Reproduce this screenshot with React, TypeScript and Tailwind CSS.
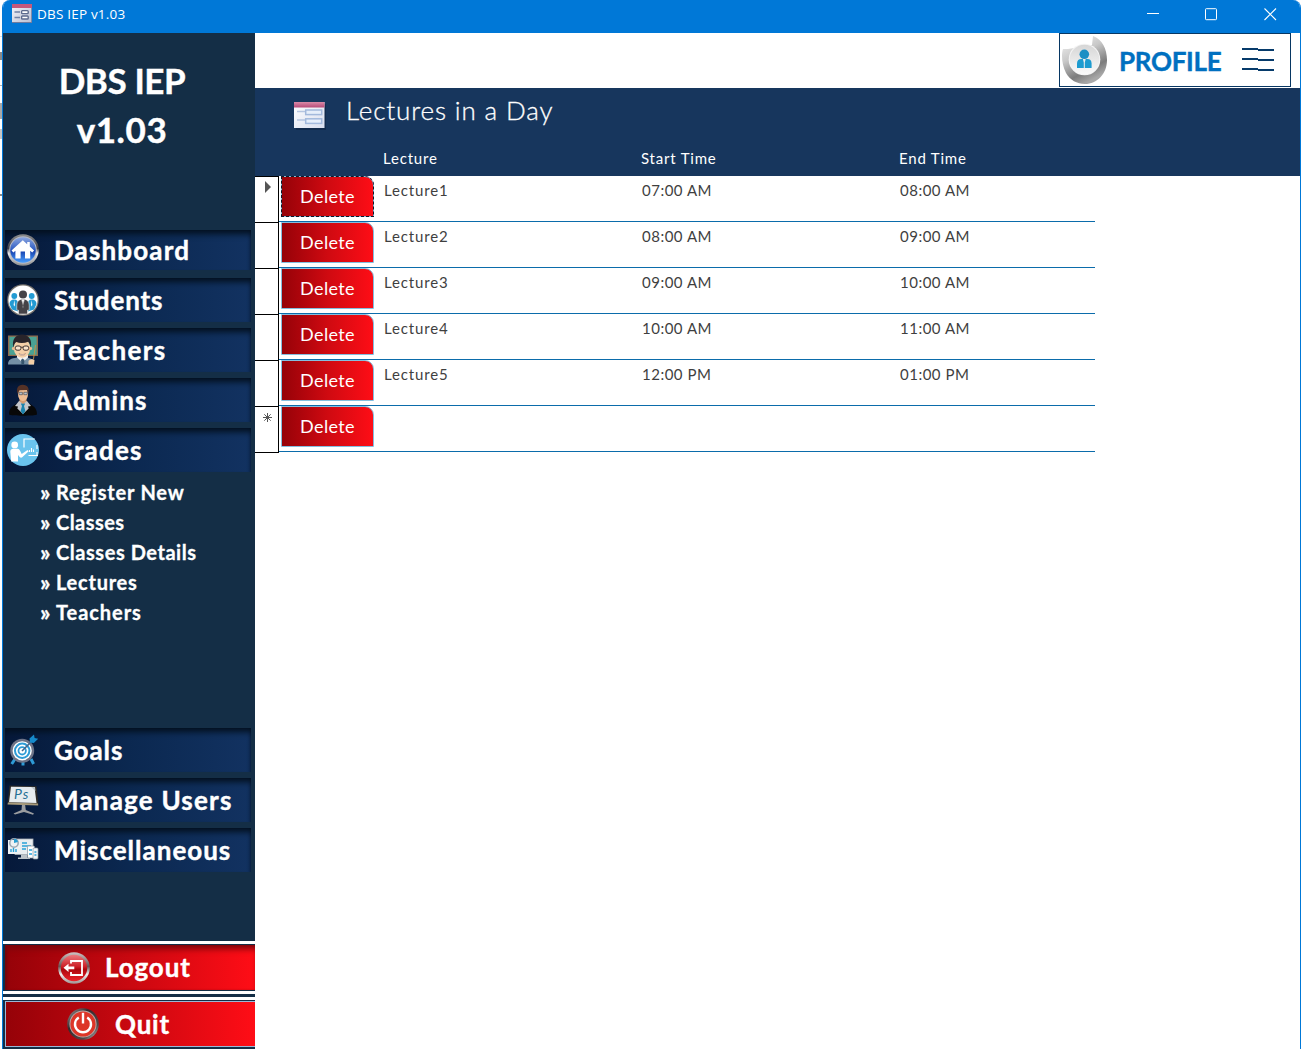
import type { ReactNode } from 'react';

function FormIcon({ className }: { className: string }) {
  return (
    <svg viewBox="0 0 32 28" preserveAspectRatio="none" className={className}>
      <defs>
        <linearGradient id="formTop" x1="0" y1="0" x2="0" y2="1">
          <stop offset="0" stopColor="#d98aa8" />
          <stop offset="1" stopColor="#b84a78" />
        </linearGradient>
        <linearGradient id="formBody" x1="0" y1="0" x2="1" y2="1">
          <stop offset="0" stopColor="#ffffff" />
          <stop offset="1" stopColor="#d9deee" />
        </linearGradient>
      </defs>
      <rect x="2" y="2" width="30" height="26" fill="#0a1c38" opacity="0.45" />
      <rect x="0" y="0" width="30.5" height="26" fill="url(#formBody)" />
      <rect x="0" y="0" width="30.5" height="5.5" fill="url(#formTop)" />
      <path d="M3 9.5h8M3 18h8" stroke="#b5c5e0" strokeWidth="1.6" />
      <rect x="11.7" y="8" width="16" height="4.6" fill="#e6eefa" stroke="#a3b9dc" strokeWidth="1.5" />
      <rect x="11.7" y="16.8" width="16" height="4.6" fill="#e6eefa" stroke="#a3b9dc" strokeWidth="1.5" />
    </svg>
  );
}

function TitleIcon() {
  return (
    <svg viewBox="0 0 20 19" className="h-[19px] w-5">
      <defs>
        <linearGradient id="titleBody" x1="0" y1="0" x2="1" y2="1">
          <stop offset="0" stopColor="#f6f6fa" />
          <stop offset="1" stopColor="#b9bfd2" />
        </linearGradient>
      </defs>
      <rect width="20" height="19" fill="#6f7b9e" />
      <rect x="0" y="0" width="19.2" height="18" fill="url(#titleBody)" />
      <rect width="20" height="4" fill="#c4587c" />
      <path d="M2.5 8h5.5M2.5 13.5h5.5" stroke="#7081a5" strokeWidth="1.3" />
      <rect x="9.6" y="6.6" width="6.6" height="3" rx="0.8" fill="#fff" stroke="#5d6b8e" strokeWidth="1.4" />
      <rect x="9.6" y="12" width="6.6" height="3" rx="0.8" fill="#fff" stroke="#5d6b8e" strokeWidth="1.4" />
    </svg>
  );
}

const iconClass = 'h-8 w-8 shrink-0';

function HomeIcon() {
  return (
    <svg viewBox="0 0 32 32" className={iconClass}>
      <defs>
        <linearGradient id="homeRing" x1="0" y1="0" x2="0" y2="1">
          <stop offset="0" stopColor="#8e8e8e" />
          <stop offset="0.45" stopColor="#3c3c44" />
          <stop offset="0.6" stopColor="#e8e8e8" />
          <stop offset="1" stopColor="#8a8a8a" />
        </linearGradient>
        <linearGradient id="homeBlue" x1="0" y1="0" x2="0" y2="1">
          <stop offset="0" stopColor="#8ba6e0" />
          <stop offset="0.45" stopColor="#3561c4" />
          <stop offset="0.55" stopColor="#1743b0" />
          <stop offset="1" stopColor="#4aa0ff" />
        </linearGradient>
      </defs>
      <circle cx="16" cy="16" r="15.8" fill="url(#homeRing)" />
      <circle cx="16" cy="16" r="13.8" fill="#b7bac4" />
      <circle cx="16" cy="16" r="12.8" fill="url(#homeBlue)" />
      <path d="M15.8 6.2 4.5 16.4l1.9 2 2-1.6V24.5h5.2v-7h4.4v7h5.200v-7.700l2 1.600 1.900-2-4.300-4V8h-2.600v2.300Z" fill="#fff" />
    </svg>
  );
}

function StudentsIcon() {
  return (
    <svg viewBox="0 0 32 32" className={iconClass}>
      <circle cx="16" cy="16" r="15.8" fill="#77736d" />
      <circle cx="16" cy="16" r="14.6" fill="#fff" />
      <g fill="#239bd3">
        <circle cx="7.3" cy="12" r="2.9" />
        <circle cx="24.7" cy="12" r="2.9" />
        <path d="M2.5 20c0-3 1.8-4.5 4.5-4.5 3 0 4.2 1.5 4.2 4.5v7.5L5 25.5ZM29.5 20c0-3-1.8-4.5-4.5-4.5-3 0-4.2 1.5-4.2 4.5v7.5l6.2-2Z" />
      </g>
      <path d="m7.3 16-.7 5 .7 1.500.7-1.500ZM24.700 16l-.7 5 .7 1.500.7-1.500Z" fill="#fff" />
      <circle cx="16" cy="10.5" r="4" fill="#454348" />
      <path d="M9.800 21.500c0-4 2-6.300 6.200-6.300s6.200 2.300 6.200 6.300v4.700h-1.700V30h-9v-3.800H9.800Z" fill="#454348" stroke="#fff" strokeWidth="0.5" />
      <path d="m14.500 15.500 1.500 9 1.500-9Z" fill="#fff" />
      <path d="m16 16-.8 5.500.8 2 .8-2Z" fill="#454348" />
    </svg>
  );
}

function TeachersIcon() {
  return (
    <svg viewBox="0 0 32 32" className={iconClass}>
      <rect x="1" y="1.5" width="30" height="20.5" fill="#8f6a4c" />
      <rect x="2.400" y="2.800" width="27.200" height="18" fill="#4aa294" />
      <path d="M1 30.500c0-5 3-6 9-7h10c5 1 7 2.500 7 7Z" fill="#7590a6" />
      <path d="m10 23.500 5.500 5 5.500-5V21H10Z" fill="#f2f2f2" />
      <path d="m14 26 1.500-1.500 2 1.500-.5 4.500h-2.500Z" fill="#37556e" />
      <ellipse cx="15" cy="14" rx="8.200" ry="9.800" fill="#f3cfa8" />
      <circle cx="6.600" cy="14.500" r="1.700" fill="#edbd91" />
      <circle cx="23.400" cy="14.500" r="1.700" fill="#edbd91" />
      <path d="M6.300 13.500C4.800 5.500 8.500.5 15 .5c7 0 10.200 5.500 8.900 13-.8-3-1.500-4.500-2.700-5.800-3.800 1.600-8.200 1.600-12 .4-1.600 1.400-2.400 3-2.900 5.400Z" fill="#29242a" />
      <g fill="#f9e4cc" stroke="#3d3230" strokeWidth="1">
        <rect x="8.300" y="12" width="5.600" height="4.200" rx="1.800" />
        <rect x="16.100" y="12" width="5.600" height="4.200" rx="1.800" />
        <path d="M14 13.200h2.200" />
      </g>
      <path d="M12 19.500c2 1.400 4.500 1.400 6.500 0-1 2.500-5.500 2.500-6.500 0Z" fill="#fff" stroke="#885345" strokeWidth="0.4" />
      <path d="m28.500 11-2 14" stroke="#cc9142" strokeWidth="0.9" />
      <path d="M21.500 27c1-2 5-2.500 6-.8l-.5 4.300h-5.500Z" fill="#f3cfa8" />
    </svg>
  );
}

function AdminsIcon() {
  return (
    <svg viewBox="0 0 32 32" className={iconClass}>
      <path d="M2 30.500c0-7 4-8.700 9.500-12h9c5.500 3.300 9.500 5 9.500 12-2 1.600-26 1.600-28 0Z" fill="#080808" />
      <path d="m12 17-4 5 3 .6-.7 2L16 30l5.700-5.400-.7-2 3-.6-4-5Z" fill="#c4c6cb" />
      <path d="m16 18-2 2 1 2-1.400 5 2.400 3.500 2.400-3.500L17 22l1-2Z" fill="#1c83ad" />
      <path d="M12.500 14h7v3.500L16 20l-3.500-2.500Z" fill="#d59b70" />
      <ellipse cx="16" cy="10" rx="5" ry="7" fill="#efbd93" />
      <path d="M10.600 10C9 4.300 11 .7 15.500.7c5.500 0 7 3.500 5.800 9.300l-1-4-7.600.2c-1 .8-1.600 2-2.100 3.800Z" fill="#553226" />
      <path d="M11.700 8.300h3.700v2.400h-3.200ZM16.800 8.300h3.700l-.5 2.400h-3.200Z" fill="#b5c1ce" stroke="#414247" strokeWidth="0.6" />
    </svg>
  );
}

function GradesIcon() {
  return (
    <svg viewBox="0 0 32 32" className={iconClass}>
      <circle cx="16" cy="16" r="16" fill="#6ac3ed" />
      <path d="M17 13.500V5h10.800M21.500 21.500h9.500" fill="none" stroke="#fff" strokeWidth="1.2" />
      <circle cx="7.700" cy="10.900" r="3.400" fill="#fff" />
      <path d="M3.300 17.800c0-2 1.200-3 3-3h4.300c1.500 0 2 1.200 2.600 2.300l1.500 2.800 5.800-4 1.200 1.400-6.500 6c-.8.700-1.800.600-2.500-.2L11 21v6.500H4.200Z" fill="#fff" />
      <path d="M22.500 18v-2M24.500 18v-4M26.500 18v-2.500M30 11v4M30 18v3" stroke="#fff" strokeWidth="1.1" />
    </svg>
  );
}

function GoalsIcon() {
  return (
    <svg viewBox="0 0 32 32" className={iconClass}>
      <path d="m8 25-3.300 5M24 25l2.600 5M16 27v4.500" stroke="#2e9bd6" strokeWidth="3" />
      <circle cx="15.200" cy="16.800" r="12" fill="#6d7387" />
      <circle cx="15.200" cy="16.800" r="9.600" fill="#fff" />
      <circle cx="15.200" cy="16.800" r="7.200" fill="none" stroke="#2e9bd6" strokeWidth="2" />
      <circle cx="15.200" cy="16.800" r="3.700" fill="none" stroke="#2e9bd6" strokeWidth="1.800" />
      <path d="M15 17 26 6" stroke="#45658b" strokeWidth="1.600" />
      <path d="m23 8.500-.5-4L27 .4l.6 3.500 3.600.8-4.400 4.300Z" fill="#168acb" />
    </svg>
  );
}

function ManageUsersIcon() {
  return (
    <svg viewBox="0 0 32 32" className={iconClass}>
      <path d="M15 20h3l.8 6 8.200 3.600-1 1.200L17 28l-9 2.600-1.500-1.200L14.500 26Z" fill="#9b9da0" />
      <path d="m2.500 1.500 27 .8 2 18.700-31-1Z" fill="#2b2926" />
      <path d="M4 2.800 27.500 3l2 16L2 18.200Z" fill="#e7ecef" />
      <path d="m1 18.500 30 1 .2 2-30.700-1Z" fill="#a79a7b" />
      <text x="7" y="14.500" fill="#266f94" fontFamily="Lato, sans-serif" fontSize="14" fontStyle="italic" fontWeight="400" letterSpacing="1">
        Ps
      </text>
      <path d="m24 3 4 .1.500 4Z" fill="#bdc5c9" />
    </svg>
  );
}

function MiscIcon() {
  return (
    <svg viewBox="0 0 32 32" className={iconClass}>
      <rect x="8" y="5" width="18" height="15.500" fill="#e9edf0" stroke="#a9aeb4" strokeWidth="0.8" />
      <path d="M14 20.500h6v3h3V25H11v-1.500h3Z" fill="#bcc2c8" />
      <rect x="1" y="6" width="12" height="14" fill="#eef2f4" />
      <circle cx="7" cy="9" r="4.200" fill="none" stroke="#9ca8b2" strokeWidth="1.500" />
      <path d="M7 4.800a4.200 4.200 0 0 1 4 3.200L7 9Z" fill="#299fd3" />
      <path d="M4 18v-3M6.500 18v-4M9 18v-3M15 9h5M15 12h9M15 15h4M21 15h2" stroke="#2aa2d7" strokeWidth="1.400" />
      <rect x="20.500" y="12" width="7" height="12" rx="1" fill="#fff" stroke="#89939c" strokeWidth="0.7" />
      <rect x="26" y="14" width="5" height="11" rx="1" fill="#eef3f6" stroke="#8f9ba4" strokeWidth="0.7" />
      <path d="M22 16h3M22 20h3M27.400 18h2M27.400 21h2" stroke="#2aa2d7" strokeWidth="1.500" />
    </svg>
  );
}

function LogoutIcon() {
  return (
    <svg viewBox="0 0 32 32" className={iconClass}>
      <defs>
        <linearGradient id="outRing" x1="0" y1="0" x2="0" y2="1">
          <stop offset="0" stopColor="#cfc4c4" />
          <stop offset="0.45" stopColor="#6a5353" />
          <stop offset="0.7" stopColor="#efefef" />
          <stop offset="1" stopColor="#9d9292" />
        </linearGradient>
        <linearGradient id="outRed" x1="0" y1="0" x2="0" y2="1">
          <stop offset="0" stopColor="#ec7a7e" />
          <stop offset="0.45" stopColor="#cd2027" />
          <stop offset="0.55" stopColor="#ac070d" />
          <stop offset="1" stopColor="#ed242b" />
        </linearGradient>
      </defs>
      <circle cx="16" cy="16" r="15.800" fill="url(#outRing)" />
      <circle cx="16" cy="16" r="13.200" fill="url(#outRed)" />
      <path d="M13 11.500V9h11v14H13v-3" fill="none" stroke="#fff" strokeWidth="1.800" />
      <path d="m5.500 15.800 5-4v2.700h5.800v2.700h-5.800V20Z" fill="#fff" />
    </svg>
  );
}

function PowerIcon() {
  return (
    <svg viewBox="0 0 32 32" className={iconClass}>
      <defs>
        <linearGradient id="powerRing" x1="0" y1="0" x2="1" y2="1">
          <stop offset="0" stopColor="#a7a1a1" />
          <stop offset="0.35" stopColor="#35292b" />
          <stop offset="0.75" stopColor="#52494a" />
          <stop offset="1" stopColor="#d7d4d4" />
        </linearGradient>
      </defs>
      <circle cx="16" cy="16" r="15.800" fill="url(#powerRing)" />
      <circle cx="16" cy="16" r="13.600" fill="#b9aaa9" />
      <circle cx="16" cy="16" r="12.600" fill="#dd3527" />
      <path d="M11.800 9.400a8 8 0 1 0 8.400 0" fill="none" stroke="#fff" strokeWidth="2.400" />
      <path d="M16 4.800v10.700" stroke="#fff" strokeWidth="2.400" />
    </svg>
  );
}

function ProfileIcon() {
  return (
    <svg viewBox="0 0 46 50" className="h-[50px] w-[46px] shrink-0">
      <defs>
        <linearGradient id="profRing" x1="0" y1="0" x2="0.5" y2="1">
          <stop offset="0" stopColor="#f7f7f7" />
          <stop offset="0.45" stopColor="#c8c8c8" />
          <stop offset="0.8" stopColor="#7c7c7c" />
          <stop offset="1" stopColor="#a8a8a8" />
        </linearGradient>
        <linearGradient id="profDisc" x1="0" y1="0" x2="0" y2="1">
          <stop offset="0" stopColor="#d6d6d6" />
          <stop offset="1" stopColor="#fafafa" />
        </linearGradient>
      </defs>
      <path d="M6 14H1C-1 20 0 30 4 38c4 7 11 11 19 11 12 0 22-10 22-24C45 14 40 4 31 1l-1 9Z" fill="url(#profRing)" />
      <circle cx="22.500" cy="24.500" r="15.800" fill="#f4f4f4" />
      <circle cx="22.500" cy="24.500" r="14.800" fill="url(#profDisc)" />
      <circle cx="22.300" cy="19.300" r="4.800" fill="#1c8fc4" />
      <path d="M15 33v-4.500c0-3.200 1.800-4.500 4.200-4.500h6.200c2.500 0 4.200 1.400 4.200 4.500V33Z" fill="#1c9bd0" />
      <path d="m20.900 24 .9 3.500V33h1v-5.500l.9-3.500Z" fill="#eee" />
    </svg>
  );
}

type NavProps = { icon: ReactNode; label: string; track: string; short?: boolean };

function NavItem({ icon, label, track, short }: NavProps) {
  return (
    <div
      className={`flex w-[246px] items-center bg-linear-to-r from-[#06193a] via-[#0b2850] to-[#123261] pl-0.5 shadow-[inset_0_7px_6px_-3px_#03101f,inset_-3px_0_3px_-2px_#0c2344] ${short ? 'h-10' : 'h-11'}`}
    >
      {icon}
      <span className={`ml-[15px] text-[26px] leading-none font-bold whitespace-nowrap text-white [-webkit-text-stroke:0.4px_white] ${track}`}>{label}</span>
    </div>
  );
}

const gradeLinks = [
  { label: 'Register New', track: 'tracking-[0.8px]' },
  { label: 'Classes', track: 'tracking-[0.45px]' },
  { label: 'Classes Details', track: 'tracking-[0.55px]' },
  { label: 'Lectures', track: 'tracking-[0.75px]' },
  { label: 'Teachers', track: 'tracking-[0.95px]' },
];

const rows = [
  { name: 'Lecture1', start: '07:00 AM', end: '08:00 AM' },
  { name: 'Lecture2', start: '08:00 AM', end: '09:00 AM' },
  { name: 'Lecture3', start: '09:00 AM', end: '10:00 AM' },
  { name: 'Lecture4', start: '10:00 AM', end: '11:00 AM' },
  { name: 'Lecture5', start: '12:00 PM', end: '01:00 PM' },
  { name: '', start: '', end: '' },
];

function Sidebar() {
  return (
    <aside className="flex w-[252px] shrink-0 flex-col bg-[#142e46]">
      <h1 className="h-[197px] pt-[23px] pr-3.5 text-center text-[35px] leading-[49px] font-bold text-white [-webkit-text-stroke:0.4px_white]">
        <span className="block tracking-[-0.4px]">DBS IEP</span>
        <span className="block tracking-[0.6px]">v1.03</span>
      </h1>
      <nav className="ml-0.5 flex flex-col">
        <div className="h-12">
          <NavItem icon={<HomeIcon />} label="Dashboard" track="tracking-[1.15px]" short />
        </div>
        <div className="flex flex-col gap-1.5">
          <NavItem icon={<StudentsIcon />} label="Students" track="tracking-[0.9px]" />
          <NavItem icon={<TeachersIcon />} label="Teachers" track="tracking-[1.35px]" />
          <NavItem icon={<AdminsIcon />} label="Admins" track="tracking-[1.1px]" />
          <NavItem icon={<GradesIcon />} label="Grades" track="tracking-[1.2px]" />
        </div>
        <ul className="h-64 pt-[5px] pl-[35px]">
          {gradeLinks.map((link) => (
            <li key={link.label} className="flex h-[30px] items-center text-xl font-bold whitespace-nowrap text-white [-webkit-text-stroke:0.3px_white]">
              <span className="w-4 text-[23px] leading-none">»</span>
              <span className={link.track}>{link.label}</span>
            </li>
          ))}
        </ul>
        <div className="flex flex-col gap-1.5">
          <NavItem icon={<GoalsIcon />} label="Goals" track="tracking-[0.9px]" />
          <NavItem icon={<ManageUsersIcon />} label="Manage Users" track="tracking-[1.2px]" />
          <NavItem icon={<MiscIcon />} label="Miscellaneous" track="tracking-[1px]" />
        </div>
      </nav>
      <div className="mt-auto h-[108px]">
        <div className="h-[53px] border-y-3 border-white pt-px pb-px pl-0.5">
          <div className="flex h-[45px] items-center bg-linear-to-r from-[#950208] via-[#c90810] to-[#ff0d16] pl-[53px] shadow-[inset_0_7px_6px_-3px_#7c060b,inset_3px_0_3px_-1px_#70060b]">
            <LogoutIcon />
            <span className="-mt-0.5 ml-[15px] text-[26px] leading-none font-bold tracking-[0.9px] text-white [-webkit-text-stroke:0.4px_white]">Logout</span>
          </div>
        </div>
        <div className="mt-[3px] h-[52px] border-t-3 border-white pt-px pl-0.5">
          <div className="flex h-[46px] items-center border border-r-0 border-[#9bb7d6] bg-linear-to-r from-[#950208] via-[#c90810] to-[#ff0d16] pl-[61px]">
            <PowerIcon />
            <span className="ml-4 text-[26px] leading-none font-bold tracking-[0.8px] text-white [-webkit-text-stroke:0.4px_white]">Quit</span>
          </div>
        </div>
      </div>
    </aside>
  );
}

function Row({ row, index }: { row: (typeof rows)[number]; index: number }) {
  return (
    <div className="flex h-[46px] text-[15px] leading-5 text-[#3f3f3f]">
      <div className="flex w-6 shrink-0 justify-center border-t border-r border-black pt-1 pl-px">
        {index === 0 && (
          <svg viewBox="0 0 6 12" className="ml-px h-3 w-1.5">
            <path d="M0 0v12l6-6Z" fill="#555" />
          </svg>
        )}
        {index === 5 && (
          <svg viewBox="0 0 11 11" className="mt-px ml-px h-[11px] w-[11px]">
            <path d="M5.500 1v9M1 5.500h9M2.300 2.300l6.400 6.400M8.700 2.300 2.300 8.700" stroke="#555" strokeWidth="1" />
          </svg>
        )}
      </div>
      <div className="flex w-[816px] border-b border-[#0b6cab] pl-0.5">
        <button
          className={`h-[41px] w-[93px] shrink-0 rounded-tr-[9px] border bg-linear-to-r from-[#950208] via-[#cf0a11] to-[#ff0d16] bg-origin-border pb-0.5 text-lg leading-none tracking-[0.35px] text-white ${index === 0 ? 'border-[#84bede] outline-1 -outline-offset-1 outline-dashed outline-[#101828]' : 'border-[#84bede]'}`}
        >
          Delete
        </button>
        <span className="w-[258px] pt-1 pl-2.5 tracking-[0.85px]">{row.name}</span>
        <span className="w-[258px] pt-1 pl-2.5 tracking-[0.5px]">{row.start}</span>
        <span className="pt-1 pl-2.5 tracking-[0.5px]">{row.end}</span>
      </div>
    </div>
  );
}

export default function App() {
  return (
    <div className="flex h-[1049px] w-[1302px] overflow-hidden bg-white font-[Lato,sans-serif]">
      <div className="flex w-0.5 shrink-0 flex-col">
        <div className="mt-9 h-px bg-[#dddddd]" />
        <div className="mt-[15px] h-2 bg-[#8a8a8a]" />
        <div className="mt-[25px] h-px bg-[#b5b5b5]" />
        <div className="mt-[17px] h-4 bg-[#a8a8a8]" />
        <div className="mt-2.5 h-2.5 bg-[#c6c6c6]" />
        <div className="mt-[55px] h-0.5 bg-[#8a8a8a]" />
      </div>
      <div className="flex w-[1299px] shrink-0 flex-col overflow-hidden rounded-t-lg border-x border-[#0078d7]">
        <header className="flex h-[33px] shrink-0 items-start bg-[#0078d7] pl-[9px] text-white">
          <div className="mt-1">
            <TitleIcon />
          </div>
          <span className="mt-1 ml-[5px] font-['Open_Sans',sans-serif] text-[13.5px] leading-5 tracking-[0.2px]">DBS IEP v1.03</span>
          <svg viewBox="0 0 130 13" className="mt-2 mr-[23px] ml-auto h-[13px] w-[130px]" fill="none" stroke="#fff">
            <path d="M0 5.500h12" />
            <rect x="58.500" y="0.700" width="11" height="11" rx="0.800" />
            <path d="m117.500.500 11.500 11.500M129 .500 117.500 12" strokeWidth="1.100" />
          </svg>
        </header>
        <div className="flex flex-1">
          <Sidebar />
          <main className="flex flex-1 flex-col">
            <div className="flex h-[55px] shrink-0 justify-end pr-[9px]">
              <div className="flex h-[54px] w-[232px] items-center border border-[#073763] pl-0.5">
                <ProfileIcon />
                <span className="mt-0.5 ml-[11px] text-[26px] leading-none font-bold tracking-[-0.3px] text-[#0070c0] [-webkit-text-stroke:0.4px_#0070c0]">PROFILE</span>
                <svg viewBox="0 0 32 24" className="mr-4 ml-auto h-6 w-8 shrink-0" fill="none" stroke="#073b6b" strokeWidth="2">
                  <path d="M0 1h16M16 2h16M0 11h16M16 12h16M0 21h16M16 22h16" />
                </svg>
              </div>
            </div>
            <div className="flex h-[88px] shrink-0 flex-col bg-[#17365d]">
              <div className="flex h-[60px] pl-[39px]">
                <FormIcon className="mt-3.5 h-7 w-8" />
                <h2 className="mt-1 ml-5 text-[26px] leading-9 font-light tracking-[0.87px] whitespace-nowrap text-white [-webkit-text-stroke:0.3px_white]">
                  Lectures in a Day
                </h2>
              </div>
              <div className="flex pl-32 text-[15px] leading-5 tracking-[0.8px] text-white">
                <span className="w-[258px]">Lecture</span>
                <span className="w-[258px]">Start Time</span>
                <span>End Time</span>
              </div>
            </div>
            <div className="w-[840px]">
              {rows.map((row, index) => (
                <Row key={index} row={row} index={index} />
              ))}
              <div className="h-px w-6 bg-black" />
            </div>
          </main>
        </div>
      </div>
    </div>
  );
}
